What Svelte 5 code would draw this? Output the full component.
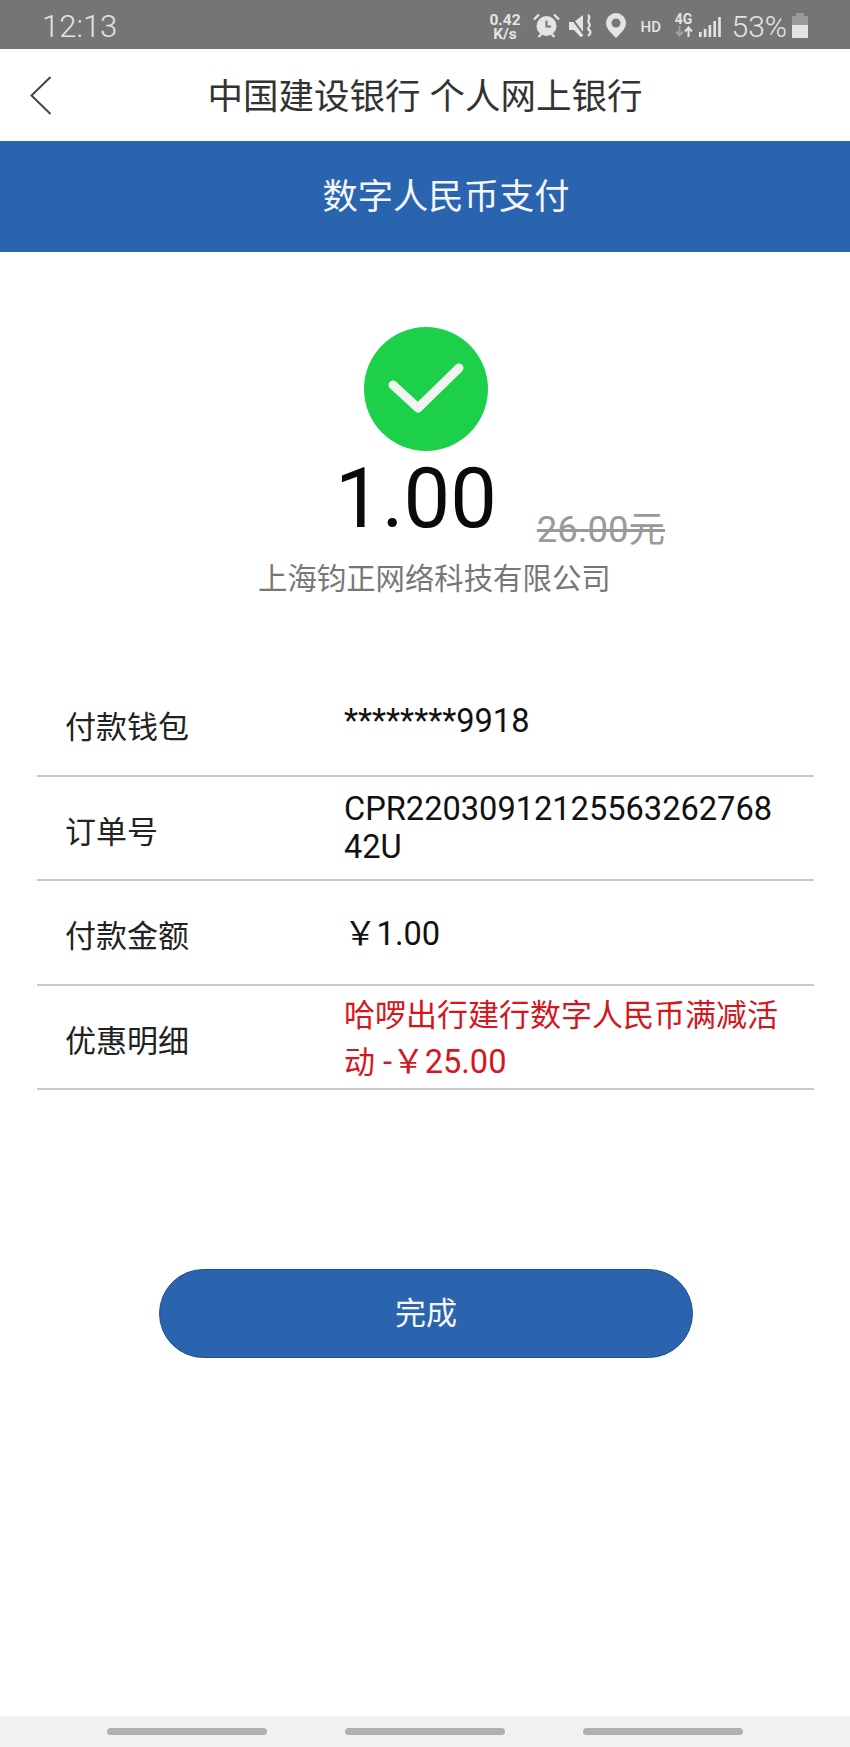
<script lang="ts">
  type Row = { label: string; value: string; extra?: string; kind: 'wallet' | 'order' | 'plain' | 'promo' };

  const rows: Row[] = [
    { label: '付款钱包', value: '********9918', kind: 'wallet' },
    { label: '订单号', value: 'CPR2203091212556326276842U', kind: 'order' },
    { label: '付款金额', value: '￥1.00', kind: 'plain' },
    { label: '优惠明细', value: '哈啰出行建行数字人民币满减活动', extra: ' -￥25.00', kind: 'promo' },
  ];
</script>

<div class="page">
  <div class="status">
    <span class="time">12:13</span>
    <div class="status-right">
      <span class="speed"><span>0.42</span><span>K/s</span></span>
      <svg class="ic alarm" width="27" height="25" viewBox="0 0 27 25" aria-hidden="true">
        <circle cx="13.5" cy="13" r="10" fill="#e4e4e4" />
        <path d="M13.5 7.5v6h4.5" fill="none" stroke="#757575" stroke-width="2" />
        <path d="M1 6.5 6 1.5M26 6.5l-5-5" stroke="#e4e4e4" stroke-width="2.4" />
        <path d="M5.5 24l3-3M21.5 24l-3-3" stroke="#e4e4e4" stroke-width="2.4" />
      </svg>
      <svg class="ic mute" width="25" height="25" viewBox="0 0 25 25" aria-hidden="true">
        <path d="M0 9h5l9-7v21l-2.500 1L5 17H0z" fill="#e4e4e4" />
        <path d="M1 3l15 20" stroke="#757575" stroke-width="2" />
        <path d="M19 2c4 3-2 5 1 8s-3 5 0 7 1 4-1 6" fill="none" stroke="#e4e4e4" stroke-width="2.200" />
      </svg>
      <svg class="ic pin" width="20" height="25" viewBox="0 0 20 25" aria-hidden="true">
        <path fill-rule="evenodd" d="M10 0a10 10 0 0 1 10 10c0 6-6 11-10 15C6 21 0 16 0 10A10 10 0 0 1 10 0zm0 5.500a4.500 4.500 0 1 0 0 9 4.500 4.500 0 0 0 0-9z" fill="#e4e4e4" />
      </svg>
      <span class="hd">HD</span>
      <span class="net">
        <span class="net-4g">4G</span>
        <svg width="18" height="11" viewBox="0 0 18 11" aria-hidden="true">
          <path d="M4.500 0v8M1 5.500l3.500 4 3.500-4" fill="none" stroke="#a0a0a0" stroke-width="2" />
          <path d="M13.500 11V2M10 5.500l3.500-4 3.500 4" fill="none" stroke="#e4e4e4" stroke-width="2" />
        </svg>
      </span>
      <svg class="ic signal" width="22" height="20" viewBox="0 0 22 20" aria-hidden="true">
        <g fill="#e4e4e4">
          <rect x="0" y="15" width="2.600" height="5" />
          <rect x="4.800" y="12" width="2.600" height="8" />
          <rect x="9.600" y="8" width="2.600" height="12" />
          <rect x="14.400" y="4" width="2.600" height="16" />
          <rect x="19.200" y="0" width="2.600" height="20" />
        </g>
      </svg>
      <span class="pct">53%</span>
      <div class="battery"><div class="battery-fill"></div></div>
    </div>
  </div>

  <header class="topbar">
    <svg class="back" width="22" height="39" viewBox="0 0 22 39" aria-hidden="true">
      <path d="M20.500 1 1.500 19.500 20.500 38" fill="none" stroke="#444" stroke-width="2" />
    </svg>
    <h1>中国建设银行 个人网上银行</h1>
  </header>

  <div class="banner">数字人民币支付</div>

  <section class="hero">
    <svg class="check" width="124" height="124" viewBox="0 0 124 124" aria-hidden="true">
      <circle cx="62" cy="62" r="62" fill="#1dd04a" />
      <path d="M29 58l25 23 41-40" fill="none" stroke="#f2f4f2" stroke-width="9" stroke-linecap="round" stroke-linejoin="round" />
    </svg>
    <div class="amount-row">
      <span class="amount">1.00</span>
      <span class="original">26.00元</span>
    </div>
    <div class="merchant">上海钧正网络科技有限公司</div>
  </section>

  <div class="rows">
    {#each rows as row (row.label)}
      <div class="row">
        <div class="label">{row.label}</div>
        <div class="value {row.kind}">{row.value}{#if row.extra}<span class="extra">{row.extra}</span>{/if}</div>
      </div>
    {/each}
  </div>

  <button class="done" type="button">完成</button>

  <div class="spacer"></div>

  <nav class="navbar">
    <span class="pill"></span>
    <span class="pill"></span>
    <span class="pill"></span>
  </nav>
</div>

<style>
  :global(body) {
    margin: 0;
    background: #fff;
  }

  .page {
    width: 850px;
    height: 1747px;
    display: flex;
    flex-direction: column;
    font-family: Roboto, 'Noto Sans CJK SC', sans-serif;
    overflow: hidden;
  }

  .status {
    height: 49px;
    flex: none;
    background: #757575;
    display: flex;
    align-items: center;
    justify-content: space-between;
    padding: 4px 42px 0 42px;
    box-sizing: border-box;
    color: #e4e4e4;
  }

  .time {
    font-size: 31px;
    font-weight: 300;
  }

  .status-right {
    display: flex;
    align-items: center;
  }

  .speed {
    display: flex;
    flex-direction: column;
    align-items: center;
    font-size: 15.500px;
    font-weight: 700;
    line-height: 14px;
    width: 33px;
    margin-right: 11px;
  }

  .ic {
    display: block;
    flex: none;
  }

  .alarm {
    margin: -3px 9px 0 0;
  }

  .mute {
    margin: -3px 12px 0 0;
  }

  .pin {
    margin: -3px 15px 0 0;
  }

  .hd {
    font-size: 15px;
    font-weight: 500;
    width: 21px;
    margin-right: 13px;
  }

  .net {
    display: flex;
    flex-direction: column;
    align-items: center;
    width: 18px;
    margin: -3px 6px 0 0;
  }

  .net-4g {
    font-size: 14px;
    font-weight: 700;
    line-height: 13px;
  }

  .signal {
    margin: 1px 11px 0 0;
  }

  .pct {
    font-size: 30px;
    font-weight: 300;
    margin-right: 5px;
  }

  .battery {
    width: 16px;
    height: 25px;
    margin-top: -3px;
    background: linear-gradient(#9a9a9a, #9a9a9a) 4px 0 / 8px 3px no-repeat,
      linear-gradient(#9a9a9a, #9a9a9a) 0 3px / 16px 9px no-repeat;
    display: flex;
    align-items: flex-end;
  }

  .battery-fill {
    width: 16px;
    height: 13px;
    background: #e4e4e4;
  }

  .topbar {
    height: 92px;
    flex: none;
    position: relative;
    display: flex;
    align-items: center;
    justify-content: center;
    padding-bottom: 4px;
    box-sizing: border-box;
    background: #fff;
  }

  .back {
    position: absolute;
    left: 30px;
    top: 27px;
  }

  .topbar h1 {
    margin: 0;
    font-size: 35.500px;
    font-weight: 400;
    color: #333;
  }

  .banner {
    height: 111px;
    flex: none;
    background: #2a64ae;
    color: #f4f6fa;
    font-size: 35.300px;
    display: flex;
    align-items: center;
    justify-content: center;
    padding: 0 0 6px 42px;
    box-sizing: border-box;
  }

  .hero {
    display: flex;
    flex-direction: column;
    align-items: flex-start;
    padding-top: 75px;
    height: 420px;
    box-sizing: border-box;
    flex: none;
  }

  .check {
    display: block;
    margin-left: 364px;
  }

  .amount-row {
    display: flex;
    align-items: flex-end;
    margin-left: 335px;
    height: 95px;
  }

  .amount {
    font-size: 83px;
    line-height: 95px;
    color: #0a0a0a;
  }

  .original {
    font-size: 36.500px;
    line-height: 42px;
    color: #999;
    text-decoration: line-through;
    margin-left: 40px;
    margin-bottom: -5px;
  }

  .merchant {
    font-size: 29.400px;
    line-height: 40px;
    color: #777;
    margin: 13px 0 0 258px;
  }

  .rows {
    margin: 0 36px 0 37px;
    flex: none;
  }

  .row {
    height: 104.500px;
    display: grid;
    grid-template-columns: 307px 436px;
    align-items: center;
    border-bottom: 2px solid #c9c9c9;
    box-sizing: border-box;
  }

  .label {
    padding: 3px 0 0 28px;
    font-size: 31px;
    color: #222;
  }

  .value {
    font-size: 32.600px;
    line-height: 38px;
    color: #111;
    word-break: break-all;
  }

  .value.wallet {
    margin-top: -4px;
  }

  .value.plain {
    margin-top: 3px;
  }

  .value.promo {
    font-size: 31px;
    line-height: 47px;
    color: #d5161c;
    margin-top: 5px;
  }

  .extra {
    font-size: 32.600px;
  }

  .done {
    display: block;
    flex: none;
    margin: 179px 0 0 159px;
    width: 534px;
    height: 89px;
    border: 1px solid #1f4f8f;
    border-radius: 45px;
    background: #2a64ae;
    color: #f4f6fa;
    font-family: inherit;
    font-size: 31px;
    padding: 0 0 6px;
  }

  .spacer {
    flex: 1;
  }

  .navbar {
    height: 31px;
    flex: none;
    background: #f1f1f1;
    display: flex;
    align-items: flex-start;
    padding: 12px 0 0 107px;
    gap: 78px;
    box-sizing: border-box;
  }

  .pill {
    width: 160px;
    height: 7px;
    border-radius: 4px;
    background: #b0b0b0;
  }
</style>
